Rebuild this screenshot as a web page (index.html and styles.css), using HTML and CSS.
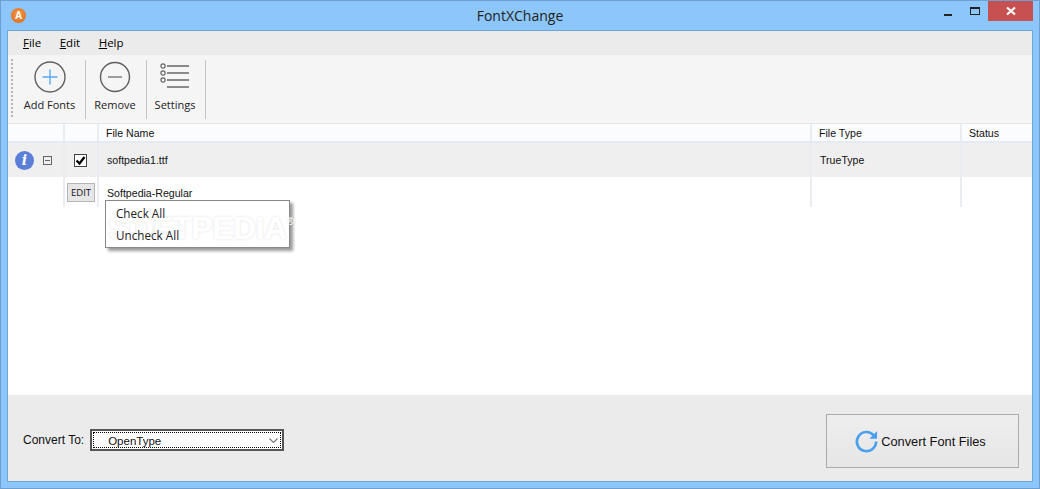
FILE: index.html
```html
<!DOCTYPE html>
<html lang="en">
<head>
  <meta charset="UTF-8" />
  <title>FontXChange</title>
  <link rel="stylesheet" href="styles.css">
</head>
<body>
  <div class="window">
    <div class="titlebar">
      <div class="app-icon">A</div>
      <div class="title">FontXChange</div>
      <div class="controls">
        <div class="ctl"><span class="min-glyph"></span></div>
        <div class="ctl"><span class="max-glyph"></span></div>
        <div class="ctl close">
          <svg width="10" height="10" viewBox="0 0 10 10"><path d="M1 1.5 9 8.5M9 1.5 1 8.5" stroke="#fff" stroke-width="2.2" fill="none"/></svg>
        </div>
      </div>
    </div>

    <div class="client">
      <!-- Menu -->
      <div class="menubar">
        <span class="menu-item"><u>F</u>ile</span>
        <span class="menu-item"><u>E</u>dit</span>
        <span class="menu-item"><u>H</u>elp</span>
      </div>

      <!-- Toolbar -->
      <div class="toolbar">
        <div class="grip"></div>
        <div class="tool tool-add">
          <svg width="34" height="34" viewBox="0 0 34 34">
            <circle cx="17" cy="17" r="15" fill="none" stroke="#5f5f5f" stroke-width="1.4"/>
            <path d="M17 9.5V24.5M9.5 17H24.5" stroke="#5aa9f2" stroke-width="1.4" fill="none"/>
          </svg>
          <span>Add Fonts</span>
        </div>
        <div class="tool tool-remove">
          <svg width="34" height="34" viewBox="0 0 34 34">
            <circle cx="17" cy="17" r="14.5" fill="none" stroke="#5f5f5f" stroke-width="1.4"/>
            <path d="M10 17H24" stroke="#777" stroke-width="1.4" fill="none"/>
          </svg>
          <span>Remove</span>
        </div>
        <div class="tool tool-settings">
          <svg width="34" height="34" viewBox="0 0 34 34">
            <circle cx="5" cy="6" r="2.1" fill="none" stroke="#666" stroke-width="1.2"/>
            <circle cx="5" cy="13" r="2.1" fill="none" stroke="#666" stroke-width="1.2"/>
            <circle cx="5" cy="20" r="2.1" fill="none" stroke="#666" stroke-width="1.2"/>
            <path d="M9 6H31M9 13H31M9 20H31M9 27H31" stroke="#666" stroke-width="1.3" fill="none"/>
          </svg>
          <span>Settings</span>
        </div>
      </div>

      <!-- Grid -->
      <div class="grid-area">
        <div class="row head">
          <div class="cell"></div>
          <div class="cell"></div>
          <div class="cell">File Name</div>
          <div class="cell">File Type</div>
          <div class="cell">Status</div>
        </div>
        <div class="row file">
          <div class="cell icons">
            <div class="info">i</div>
            <div class="collapse"></div>
          </div>
          <div class="cell center"><div class="check">
            <svg width="11" height="11" viewBox="0 0 11 11"><path d="M1.5 5.5 4.5 8.5 9.5 2" stroke="#000" stroke-width="2.2" fill="none"/></svg>
          </div></div>
          <div class="cell">softpedia1.ttf</div>
          <div class="cell">TrueType</div>
          <div class="cell"></div>
        </div>
        <div class="row sub">
          <div class="cell"></div>
          <div class="cell center"><div class="edit-btn">EDIT</div></div>
          <div class="cell">Softpedia-Regular</div>
          <div class="cell"></div>
          <div class="cell"></div>
        </div>

        <div class="context-menu">
          <div class="watermark">SOFTPEDIA<sup>®</sup></div>
          <div class="ctx-item">Check All</div>
          <div class="ctx-item">Uncheck All</div>
        </div>
      </div>

      <!-- Bottom -->
      <div class="bottom">
        <div class="convert-to">
          <span>Convert To:</span>
          <div class="select">
            <div class="select-inner">
              <span>OpenType</span>
              <svg width="9" height="5" viewBox="0 0 9 5"><path d="M0.5 0.5 4.5 4.5 8.5 0.5" stroke="#777" stroke-width="1.1" fill="none"/></svg>
            </div>
          </div>
        </div>
        <div class="convert-btn">
          <svg width="23" height="23" viewBox="0 0 24 24">
            <path d="M19.6 5.6A10 10 0 1 0 22 12" stroke="#4a9fee" stroke-width="2.8" fill="none"/>
            <path d="M23 1V9H15Z" fill="#4a9fee"/>
          </svg>
          <span>Convert Font Files</span>
        </div>
      </div>
    </div>
  </div>
</body>
</html>
```

FILE: styles.css
```css
* {
  margin: 0;
  padding: 0;
  box-sizing: border-box;
}

html, body {
  width: 100%;
  height: 100%;
  overflow: hidden;
  font-family: 'Liberation Sans', sans-serif;
  font-size: 11px;
  color: #111;
}

.window {
  width: 1040px;
  height: 489px;
  background: #8cc6fa;
  border: 1px solid #6f9fce;
  display: flex;
  flex-direction: column;
}

/* title bar */
.titlebar {
  height: 29px;
  display: flex;
  align-items: flex-start;
  position: relative;
  flex-shrink: 0;
}

.app-icon {
  width: 15px;
  height: 15px;
  margin: 7px 0 0 10px;
  border-radius: 50%;
  background: radial-gradient(circle at 50% 40%, #f39a45, #d9661a);
  color: #fff;
  font-size: 10px;
  font-weight: 700;
  line-height: 15px;
  text-align: center;
}

.title {
  position: absolute;
  left: 0;
  right: 0;
  top: 5px;
  text-align: center;
  font-family: 'Open Sans', sans-serif;
  font-size: 14px;
  line-height: 20px;
  color: #222;
}

.controls {
  display: flex;
  margin-left: auto;
  margin-right: 6px;
}

.ctl {
  width: 26px;
  height: 20px;
  display: flex;
  align-items: center;
  justify-content: center;
}

.min-glyph {
  width: 8px;
  height: 2px;
  background: #222;
  margin-top: 7px;
  margin-right: 2px;
}

.max-glyph {
  width: 10px;
  height: 8px;
  border: 1px solid #222;
  border-top-width: 2px;
}

.close {
  width: 45px;
  background: #c75050;
}

.client {
  flex: 1;
  margin: 0 6px 6px 6px;
  background: #fff;
  border: 1px solid #6fa6da;
  display: flex;
  flex-direction: column;
  min-height: 0;
}

/* menu */
.menubar {
  height: 24px;
  background: #ebebeb;
  display: flex;
  align-items: center;
  padding: 0 0 2px 15px;
  gap: 18.5px;
  flex-shrink: 0;
  font-family: 'Open Sans', sans-serif;
  font-size: 11.5px;
  color: #000;
}

/* toolbar */
.toolbar {
  height: 69px;
  background: #f5f5f5;
  display: flex;
  padding-top: 5px;
  flex-shrink: 0;
  border-bottom: 1px solid #e6e6e6;
}

.grip {
  width: 2px;
  height: 58px;
  margin: -1px 0 0 3px;
  background: repeating-linear-gradient(#b5b5b5 0 2px, transparent 2px 4px);
}

.tool {
  height: 59px;
  border-right: 1px solid #c4c4c4;
  display: flex;
  flex-direction: column;
  align-items: center;
  justify-content: space-between;
  padding-bottom: 7px;
  color: #222;
  font-family: 'Open Sans', sans-serif;
  font-size: 11px;
}

.tool-add { width: 72px; margin-left: 1px; }
.tool-remove { width: 61px; padding-right: 2px; }
.tool-settings { width: 59px; padding-right: 2px; }

/* file list */
.grid-area {
  flex: 1;
  position: relative;
  overflow: hidden;
  font-size: 10.6px;
}

.row {
  display: grid;
  grid-template-columns: 57px 34px 713px 150px 1fr;
}

.cell {
  display: flex;
  align-items: center;
  padding-left: 8px;
  border-right: 2px solid #e9edf1;
}

.cell:last-child {
  border-right: 0;
}

.cell.center {
  justify-content: center;
  padding-left: 0;
}

.head {
  height: 19px;
  background: #fbfcfd;
  border-bottom: 2px solid #e4ebf2;
}

.head .cell {
  padding-left: 7px;
}

.file {
  height: 34px;
  background: #efefef;
}

.sub {
  height: 30px;
}

.sub .cell:nth-child(3) {
  padding-top: 1px;
}

.file .icons {
  padding-left: 7px;
  gap: 9px;
}

.info {
  width: 19px;
  height: 19px;
  border-radius: 50%;
  background: #5b7fd8;
  color: #fff;
  font-family: 'DejaVu Serif', serif;
  font-style: italic;
  font-weight: 700;
  font-size: 14px;
  line-height: 19px;
  text-align: center;
}

.collapse {
  width: 9px;
  height: 9px;
  border: 1px solid #666;
  background: linear-gradient(#666, #666) center / 5px 1px no-repeat;
}

.check {
  width: 13px;
  height: 13px;
  margin-right: 2px;
  border: 1px solid #444;
  background: #fff;
  display: flex;
  align-items: center;
  justify-content: center;
}

.edit-btn {
  width: 28px;
  height: 19px;
  background: #e6e6e6;
  border: 1px solid #b5b5b5;
  font-family: 'Open Sans', sans-serif;
  font-size: 9.5px;
  line-height: 17px;
  text-align: center;
}

/* context menu */
.context-menu {
  position: absolute;
  left: 97px;
  top: 76px;
  width: 185px;
  height: 48px;
  background: #fff;
  border: 1px solid #8a8a8a;
  box-shadow: 3px 3px 3px rgba(0, 0, 0, 0.4);
  padding-top: 1px;
}

.ctx-item {
  position: relative;
  height: 22px;
  line-height: 22px;
  padding-left: 10px;
  color: #222;
  font-family: 'Open Sans', sans-serif;
  font-size: 11.7px;
}

.watermark {
  position: absolute;
  left: 2px;
  top: 9px;
  font-family: 'Liberation Sans', sans-serif;
  font-weight: 700;
  font-size: 32px;
  line-height: 36px;
  letter-spacing: -0.5px;
  white-space: nowrap;
  color: #fff;
  text-shadow: 0 0 3px rgba(0, 0, 0, 0.12);
}

.watermark sup {
  font-size: 10px;
  font-weight: 400;
  vertical-align: 14px;
  line-height: 0;
}

/* bottom panel */
.bottom {
  height: 86px;
  background: #ebebeb;
  display: flex;
  align-items: flex-start;
  justify-content: space-between;
  padding: 19px 13px 0 15px;
  flex-shrink: 0;
  font-size: 12px;
}

.convert-to {
  display: flex;
  align-items: center;
  gap: 6px;
  margin-top: 15px;
}

.select {
  width: 194px;
  height: 22px;
  background: #fff;
  border: 2px solid #555;
  padding: 1px;
  font-size: 11.5px;
}

.select-inner {
  height: 100%;
  border: 1px dotted #000;
  display: flex;
  align-items: center;
  justify-content: space-between;
  padding: 1px 2px 0 14px;
}

.convert-btn {
  width: 193px;
  height: 54px;
  background: linear-gradient(#eeeeee, #e6e6e6);
  border: 1px solid #ababab;
  display: flex;
  align-items: center;
  justify-content: center;
  gap: 3px;
  padding-right: 4px;
  font-size: 12.8px;
  color: #111;
}
```
